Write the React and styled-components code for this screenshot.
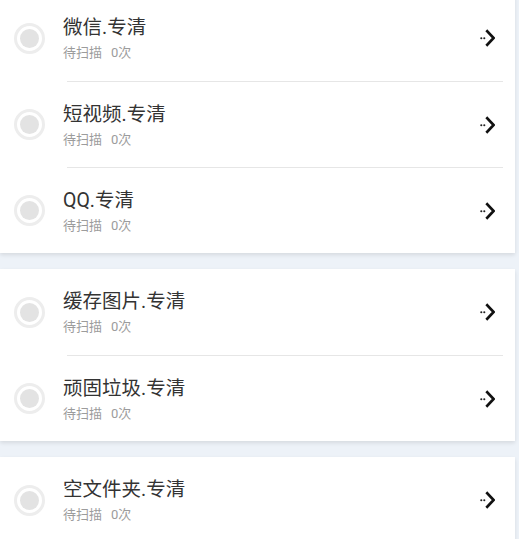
import React from "react";
import styled, { createGlobalStyle } from "styled-components";

const Global = createGlobalStyle`
  html, body { margin: 0; padding: 0; }
  body {
    background: #edf2f8;
    font-family: Roboto, "Noto Sans CJK SC", sans-serif;
    overflow: hidden;
  }
`;

const Page = styled.div`
  width: 515px;
  display: flex;
  flex-direction: column;
  gap: 16px;
  margin-top: -5px;
`;

const Section = styled.section`
  background: #fff;
  box-shadow: 0 2px 4px rgba(0, 0, 0, 0.1);
  display: flex;
  flex-direction: column;
`;

const Row = styled.div`
  height: 86px;
  display: flex;
  align-items: center;
  padding: 0 20px 0 14px;
  box-sizing: border-box;
  & + & {
    border-top: 1px solid #e6e6e6;
    border-image: linear-gradient(to right, transparent 68px, #e6e6e6 68px, #e6e6e6 502px, transparent 502px) 1;
  }
`;

const Radio = styled.span`
  width: 31px;
  height: 31px;
  border-radius: 50%;
  border: 3px solid #ededed;
  box-sizing: border-box;
  display: flex;
  align-items: center;
  justify-content: center;
  flex-shrink: 0;
  &::after {
    content: "";
    width: 19px;
    height: 19px;
    border-radius: 50%;
    background: #e3e3e3;
  }
`;

const Texts = styled.div`
  flex: 1;
  margin-left: 18px;
  display: flex;
  flex-direction: column;
  gap: 5px;
  margin-top: 2px;
`;

const Title = styled.div`
  font-size: 19.5px;
  line-height: 23px;
  color: #333;
`;

const Sub = styled.div`
  font-size: 13px;
  line-height: 18px;
  color: #9c9c9c;
  display: flex;
  gap: 9px;
`;

const Arrow = () => (
  <svg width="16" height="18" viewBox="0 0 16 18" aria-hidden="true">
    <polyline
      points="8.2,2.2 14.6,9 8.2,15.8"
      fill="none"
      stroke="#111"
      strokeWidth="2.6"
      strokeLinecap="square"
      strokeLinejoin="miter"
    />
    <circle cx="2.3" cy="9.3" r="1.05" fill="#222" />
    <circle cx="5.3" cy="9.3" r="1.05" fill="#222" />
  </svg>
);

const sections = [
  ["微信.专清", "短视频.专清", "QQ.专清"],
  ["缓存图片.专清", "顽固垃圾.专清"],
  ["空文件夹.专清"],
];

export default function App() {
  return (
    <>
      <Global />
      <Page>
        {sections.map((items, i) => (
          <Section key={i}>
            {items.map((t) => (
              <Row key={t}>
                <Radio />
                <Texts>
                  <Title>{t}</Title>
                  <Sub>
                    <span>待扫描</span>
                    <span>0次</span>
                  </Sub>
                </Texts>
                <Arrow />
              </Row>
            ))}
          </Section>
        ))}
      </Page>
    </>
  );
}
